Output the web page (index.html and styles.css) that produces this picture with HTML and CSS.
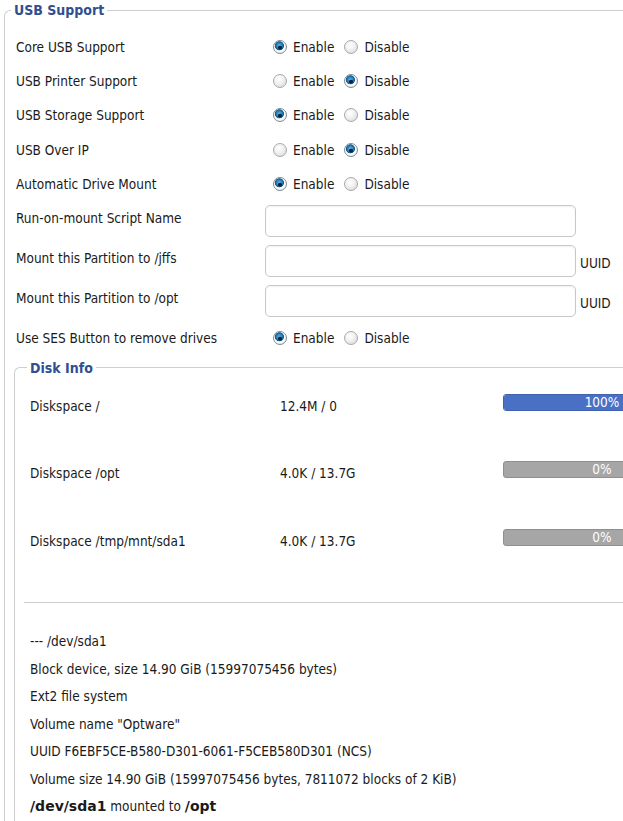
FILE: index.html
```html
<!DOCTYPE html>
<html>
<head>
<meta charset="utf-8">
<link rel="stylesheet" href="styles.css">
</head>
<body>
<fieldset class="box">
  <legend class="legend">USB Support</legend>
  <div class="row radio-row">
    <div class="label">Core USB Support</div>
    <div class="ctrl">
      <label class="opt"><input type="radio" name="core" checked><span>Enable</span></label>
      <label class="opt"><input type="radio" name="core"><span>Disable</span></label>
    </div>
  </div>
  <div class="row radio-row">
    <div class="label">USB Printer Support</div>
    <div class="ctrl">
      <label class="opt"><input type="radio" name="prn"><span>Enable</span></label>
      <label class="opt"><input type="radio" name="prn" checked><span>Disable</span></label>
    </div>
  </div>
  <div class="row radio-row">
    <div class="label">USB Storage Support</div>
    <div class="ctrl">
      <label class="opt"><input type="radio" name="stor" checked><span>Enable</span></label>
      <label class="opt"><input type="radio" name="stor"><span>Disable</span></label>
    </div>
  </div>
  <div class="row radio-row">
    <div class="label">USB Over IP</div>
    <div class="ctrl">
      <label class="opt"><input type="radio" name="ip"><span>Enable</span></label>
      <label class="opt"><input type="radio" name="ip" checked><span>Disable</span></label>
    </div>
  </div>
  <div class="row radio-row">
    <div class="label">Automatic Drive Mount</div>
    <div class="ctrl">
      <label class="opt"><input type="radio" name="auto" checked><span>Enable</span></label>
      <label class="opt"><input type="radio" name="auto"><span>Disable</span></label>
    </div>
  </div>
  <div class="row input-row">
    <div class="label">Run-on-mount Script Name</div>
    <div class="ctrl"><input type="text" class="text"></div>
  </div>
  <div class="row input-row">
    <div class="label">Mount this Partition to /jffs</div>
    <div class="ctrl"><input type="text" class="text"><span class="uuid">UUID</span></div>
  </div>
  <div class="row input-row">
    <div class="label">Mount this Partition to /opt</div>
    <div class="ctrl"><input type="text" class="text"><span class="uuid">UUID</span></div>
  </div>
  <div class="row radio-row">
    <div class="label">Use SES Button to remove drives</div>
    <div class="ctrl">
      <label class="opt"><input type="radio" name="ses" checked><span>Enable</span></label>
      <label class="opt"><input type="radio" name="ses"><span>Disable</span></label>
    </div>
  </div>

  <fieldset class="box inner">
    <legend class="legend">Disk Info</legend>
    <div class="disk-list">
      <div class="disk-row">
        <div class="dlabel">Diskspace /</div>
        <div class="dval">12.4M / 0</div>
        <div class="bar blue-bar"><div class="fill blue" style="width:100%"></div><span class="pct">100%</span></div>
      </div>
      <div class="disk-row">
        <div class="dlabel">Diskspace /opt</div>
        <div class="dval">4.0K / 13.7G</div>
        <div class="bar"><div class="fill" style="width:0%"></div><span class="pct">0%</span></div>
      </div>
      <div class="disk-row">
        <div class="dlabel">Diskspace /tmp/mnt/sda1</div>
        <div class="dval">4.0K / 13.7G</div>
        <div class="bar"><div class="fill" style="width:0%"></div><span class="pct">0%</span></div>
      </div>
    </div>
    <hr class="sep">
    <div class="info">
      <div>--- /dev/sda1</div>
      <div>Block device, size 14.90 GiB (15997075456 bytes)</div>
      <div>Ext2 file system</div>
      <div>Volume name "Optware"</div>
      <div>UUID F6EBF5CE-B580-D301-6061-F5CEB580D301 (NCS)</div>
      <div>Volume size 14.90 GiB (15997075456 bytes, 7811072 blocks of 2 KiB)</div>
      <div><b class="big">/dev/sda1</b> mounted to <b class="big">/opt</b></div>
    </div>
  </fieldset>
</fieldset>
</body>
</html>
```
FILE: styles.css
```css
html, body {
  margin: 0;
  padding: 0;
  background: #ffffff;
  overflow: hidden;
}
body {
  font-family: "DejaVu Sans Condensed", "DejaVu Sans", sans-serif;
  font-size: 13.5px;
  color: #1a1a1a;
  width: 760px;
}
.box {
  margin: 0 0 0 4px;
  padding: 0 0 0 9px;
  border: 1px solid #cfcfcf;
  border-right: none;
  border-radius: 6px 0 0 0;
  min-width: 0;
}
.legend {
  margin-left: -3px;
  padding: 0 3px;
  font-family: "DejaVu Sans Condensed", "DejaVu Sans", sans-serif;
  font-weight: bold;
  font-size: 14px;
  color: #2f4f90;
  line-height: 20px;
}
.row {
  display: flex;
}
.radio-row {
  height: 34.3px;
  align-items: center;
}
.input-row {
  height: 40px;
  align-items: flex-start;
}
.input-row .label {
  padding-top: 9px;
  line-height: 16px;
}
.input-row .ctrl {
  align-items: flex-start;
}
.row:first-of-type { margin-top: 9.5px; }
.label {
  width: 249px;
  padding-left: 2px;
}
.ctrl {
  display: flex;
  align-items: center;
}
.opt {
  display: flex;
  align-items: center;
  margin-right: 2px;
}
.opt input {
  appearance: none;
  -webkit-appearance: none;
  width: 14px;
  height: 14px;
  margin: 0 6px 0 8px;
  border-radius: 50%;
  border: 1px solid #a9a9a9;
  background: radial-gradient(circle at 40% 35%, #ffffff 0%, #f2f2f2 40%, #d4d4d4 100%);
  box-sizing: border-box;
}
.opt input:checked {
  border: 1px solid #7f8a94;
  background:
    radial-gradient(circle at 50% 55%, #0a2238 0, #0a2238 1.6px, transparent 2.3px),
    radial-gradient(circle at 45% 40%, #6ac0ee 0, #2a86c0 2.6px, #145a8c 4.2px, #e8eef2 4.8px, #ffffff 5.2px, #cfd4d8 100%);
}
.text {
  width: 311px;
  height: 32px;
  box-sizing: border-box;
  border: 1px solid #c8c8c8;
  border-radius: 5px;
  background: #fff;
  margin: 4px 0 0 0;
  box-shadow: inset 0 1px 2px rgba(0,0,0,0.06);
}
.uuid {
  margin-left: 4px;
  padding-top: 14px;
  line-height: 16px;
}
.inner {
  margin: 2.5px 0 0 0;
  padding: 0 0 30px 15px;
}
.disk-list {
  display: flex;
  flex-direction: column;
  gap: 37.5px;
  padding-top: 13px;
}
.disk-row {
  display: flex;
  align-items: center;
  height: 30px;
}
.dlabel { width: 250px; }
.dval { width: 223px; }
.bar {
  position: relative;
  width: 198px;
  height: 17px;
  background: #a6a6a6;
  border: 1px solid #8f8f8f;
  border-radius: 3px;
  margin-top: -7px;
  box-sizing: border-box;
  overflow: hidden;
}
.fill {
  height: 100%;
}
.fill.blue { background: #4a70c6; }
.blue-bar { border-color: #4060b0; }
.pct {
  position: absolute;
  inset: 0;
  text-align: center;
  color: #ffffff;
  font-size: 13.5px;
  line-height: 15px;
}
.sep {
  margin: 46px 0 0 -6px;
  border: none;
  border-top: 1px solid #cccccc;
  height: 0;
}
.info {
  padding-top: 25.5px;
  line-height: 27.5px;
}
.big {
  font-family: "DejaVu Sans", sans-serif;
  font-size: 14px;
}
```
